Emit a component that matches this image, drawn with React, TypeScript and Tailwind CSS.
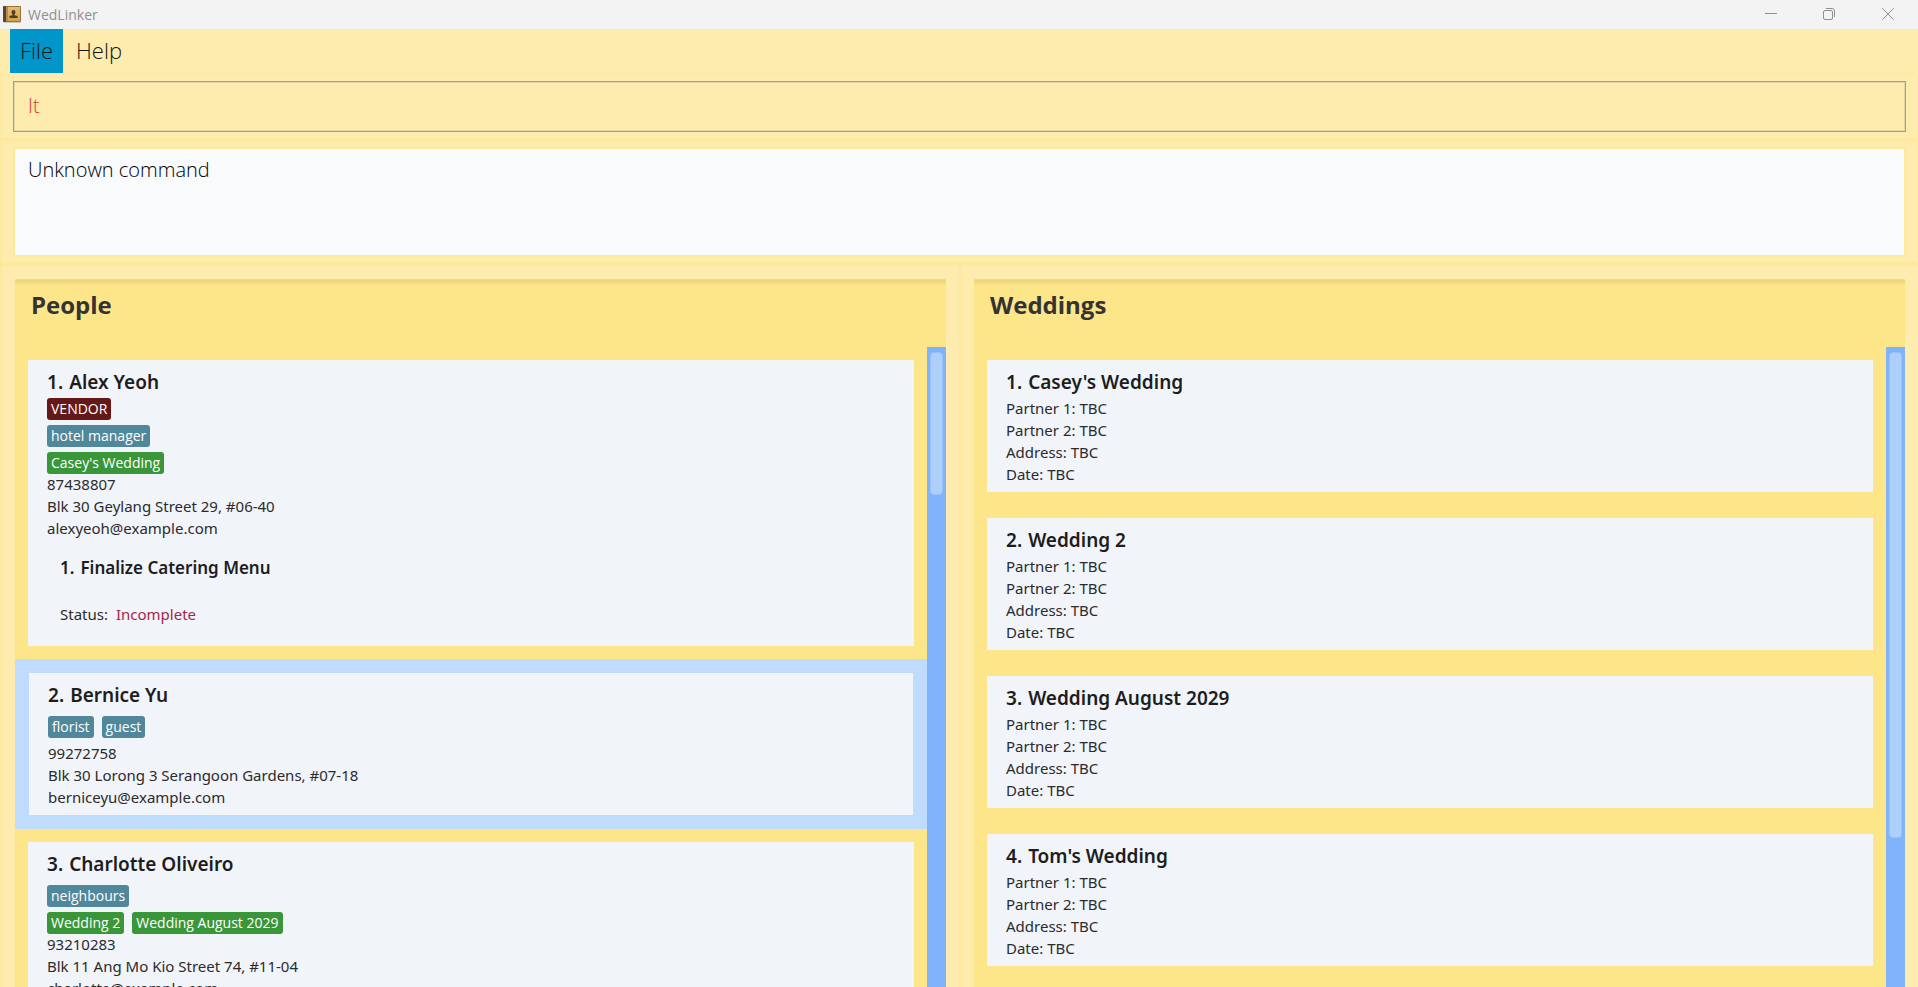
import React from "react";

type Task = { title: string; status: string };
type Person = {
  name: string;
  vendor?: boolean;
  tags?: string[];
  weddings?: string[];
  phone: string;
  address: string;
  email: string;
  tasks?: Task[];
  selected?: boolean;
};

const people: Person[] = [
  {
    name: "Alex Yeoh",
    vendor: true,
    tags: ["hotel manager"],
    weddings: ["Casey's Wedding"],
    phone: "87438807",
    address: "Blk 30 Geylang Street 29, #06-40",
    email: "alexyeoh@example.com",
    tasks: [{ title: "Finalize Catering Menu", status: "Incomplete" }],
  },
  {
    name: "Bernice Yu",
    tags: ["florist", "guest"],
    phone: "99272758",
    address: "Blk 30 Lorong 3 Serangoon Gardens, #07-18",
    email: "berniceyu@example.com",
    selected: true,
  },
  {
    name: "Charlotte Oliveiro",
    tags: ["neighbours"],
    weddings: ["Wedding 2", "Wedding August 2029"],
    phone: "93210283",
    address: "Blk 11 Ang Mo Kio Street 74, #11-04",
    email: "charlotte@example.com",
  },
];

const weddings = ["Casey's Wedding", "Wedding 2", "Wedding August 2029", "Tom's Wedding"];

function AppIcon() {
  return (
    <svg width="18" height="17" viewBox="0 0 18 17" aria-hidden="true">
      <defs>
        <linearGradient id="cover" x1="0" y1="0" x2="0" y2="1">
          <stop offset="0" stopColor="#e2bd78" />
          <stop offset="1" stopColor="#d3a047" />
        </linearGradient>
      </defs>
      <rect x="0" y="0" width="18" height="16" rx="1" fill="#9b7433" />
      <rect x="0" y="0" width="3" height="16" rx="1" fill="#51453f" />
      <rect x="3" y="1" width="2" height="14" fill="#b98d49" />
      <rect x="5" y="1" width="12" height="14" fill="url(#cover)" />
      <path d="M10.500 4a2 2 0 0 1 2 2c0 1-.4 1.800-1 2.300v1l3 .7v2h-8v-2l3-.7v-1c-.6-.5-1-1.300-1-2.300a2 2 0 0 1 2-2Z" fill="#4d3c26" />
      <rect x="1" y="16" width="17" height="1" fill="#c9c4bb" />
    </svg>
  );
}

function TitleBar() {
  return (
    <header className="flex h-[29px] shrink-0 items-center bg-[#f3f3f3] pl-[3px] text-[#8f8f8f]">
      <AppIcon />
      <span className="ml-[7px] flex-1 text-[14px] leading-5">WedLinker</span>
      <button type="button" aria-label="Minimize" className="flex h-full w-[58px] items-center justify-center pb-px">
        <svg width="12" height="12" viewBox="0 0 12 12" fill="none" stroke="currentColor">
          <path d="M0 5.500h12" />
        </svg>
      </button>
      <button type="button" aria-label="Restore" className="flex h-full w-[58px] items-center justify-center pb-px">
        <svg width="12" height="12" viewBox="0 0 12 12" fill="none" stroke="currentColor">
          <rect x="0.500" y="2.500" width="9" height="9" rx="1.500" />
          <path d="M3 .5h6a2.500 2.500 0 0 1 2.500 2.500v6" />
        </svg>
      </button>
      <button type="button" aria-label="Close" className="flex h-full w-[60px] items-center justify-center pb-px">
        <svg width="12" height="12" viewBox="0 0 12 12" fill="none" stroke="currentColor">
          <path d="M.3.3l11.400 11.400M11.700.3L.3 11.700" />
        </svg>
      </button>
    </header>
  );
}

function Tag({ children, className }: { children: React.ReactNode; className: string }) {
  return (
    <span className={`rounded-[3px] px-1 font-['Open_Sans',sans-serif] text-[14px] font-medium leading-[22px] text-white ${className}`}>
      {children}
    </span>
  );
}

function CardTitle({ index, children }: { index: number; children: React.ReactNode }) {
  return (
    <h3 className="flex h-[30px] gap-[6px] text-[19px] font-semibold leading-[28px] text-[#1d1d1d]">
      <span>{index}.</span>
      <span>{children}</span>
    </h3>
  );
}

function PersonCard({ person, index }: { person: Person; index: number }) {
  return (
    <li className={person.selected ? "bg-[#bfdbfe] p-[14px]" : "p-[13px]"}>
      <article className="bg-[#f1f4f9] px-[19px] pt-2 pb-[7px]">
        <CardTitle index={index}>{person.name}</CardTitle>
        <div className="-mb-px flex flex-col gap-[5px]">
          <div className="flex">{person.vendor && <Tag className="bg-[#641818]">VENDOR</Tag>}</div>
          <div className="flex gap-2">
            {person.tags?.map((t) => (
              <Tag key={t} className="bg-[#50879b]">{t}</Tag>
            ))}
          </div>
          <div className="flex gap-2">
            {person.weddings?.map((t) => (
              <Tag key={t} className="bg-[#399639]">{t}</Tag>
            ))}
          </div>
        </div>
        <p>{person.phone}</p>
        <p>{person.address}</p>
        <p>{person.email}</p>
        {person.tasks?.map((task, i) => (
          <section key={task.title} className="px-[13px] pt-[17px] pb-[14px]">
            <h4 className="flex gap-[6px] text-[17px] font-semibold leading-[24px] text-[#1d1d1d]">
              <span>{i + 1}.</span>
              <span>{task.title}</span>
            </h4>
            <p className="flex gap-2 pt-[23px]">
              <span>Status:</span>
              <span className="text-[#a0284c]">{task.status}</span>
            </p>
          </section>
        ))}
      </article>
    </li>
  );
}

function WeddingCard({ name, index }: { name: string; index: number }) {
  return (
    <li className="p-[13px]">
      <article className="bg-[#f1f4f9] px-[19px] pt-2 pb-[7px]">
        <CardTitle index={index}>{name}</CardTitle>
        <div className="-mt-px">
          <p>Partner 1: TBC</p>
          <p>Partner 2: TBC</p>
          <p>Address: TBC</p>
          <p>Date: TBC</p>
        </div>
      </article>
    </li>
  );
}

function Panel({ title, thumb, children }: { title: string; thumb: string; children: React.ReactNode }) {
  return (
    <section className="mx-[13px] mt-[13px] flex min-h-0 min-w-0 flex-1 flex-col bg-[#fde68a]">
      <div className="h-[68px] shrink-0 border-t border-[#f5dc84] bg-linear-to-b from-[#e9d27c] to-[#fde68a] to-[6px] px-4 pt-[5px]">
        <h2 className="text-[24px] font-bold leading-10 text-[#333333]">{title}</h2>
      </div>
      <div className="flex min-h-0 flex-1">
        <ul className="min-w-0 flex-1 overflow-hidden font-['Noto_Sans','Open_Sans',sans-serif] text-[15px] leading-[22px] text-[#2b2b2d]">
          {children}
        </ul>
        <div className="w-[19px] shrink-0 bg-[#80b3fb] px-[3px] pt-[5px]">
          <div className={`rounded-[4px] border border-[#96c1fb] bg-[#add0fb] ${thumb}`} />
        </div>
      </div>
    </section>
  );
}

export default function App() {
  return (
    <div className="flex h-screen flex-col overflow-hidden bg-[#feecae] font-['Open_Sans','Noto_Sans',sans-serif]">
      <TitleBar />
      <nav className="flex h-11 shrink-0 items-stretch pl-[10px] text-[22px] font-light text-[#141414]">
        <button type="button" className="w-[53px] bg-[#0096c9] pb-[2px]">File</button>
        <button type="button" className="ml-[3px] px-[10px] pb-[2px]">Help</button>
      </nav>
      <div className="shrink-0 border border-b-2 border-[#fde89c] pt-[7px] pr-[11px] pb-[6px] pl-3">
        <input
          type="text"
          aria-label="Command"
          defaultValue="lt"
          className="block h-[51px] w-full border border-[#a19f94] bg-transparent px-[14px] pb-[3px] text-[21px] font-light text-[#dc3c3c] shadow-[inset_0_0_0_1px_#e3d6a6] outline-none"
        />
      </div>
      <div className="shrink-0 border border-b-2 border-[#fde89c] pt-[6px] pr-[11px] pb-[5px] pl-3">
        <textarea
          readOnly
          aria-label="Result"
          value="Unknown command"
          className="block h-[110px] w-full resize-none border-2 border-[#fde99c] bg-[#f8fafc] px-[13px] pt-[5px] text-[20px] font-light leading-8 text-black outline-none"
        />
      </div>
      <main className="flex min-h-0 flex-1 border-t-2 border-[#fde89c]">
        <div className="flex min-w-0 flex-1 border-x-2 border-[#fde89c]">
          <Panel title="People" thumb="h-[143px]">
            {people.map((p, i) => (
              <PersonCard key={p.name} person={p} index={i + 1} />
            ))}
          </Panel>
        </div>
        <div className="flex min-w-0 flex-1">
          <Panel title="Weddings" thumb="h-[486px]">
            {weddings.map((w, i) => (
              <WeddingCard key={w} name={w} index={i + 1} />
            ))}
          </Panel>
        </div>
      </main>
    </div>
  );
}
